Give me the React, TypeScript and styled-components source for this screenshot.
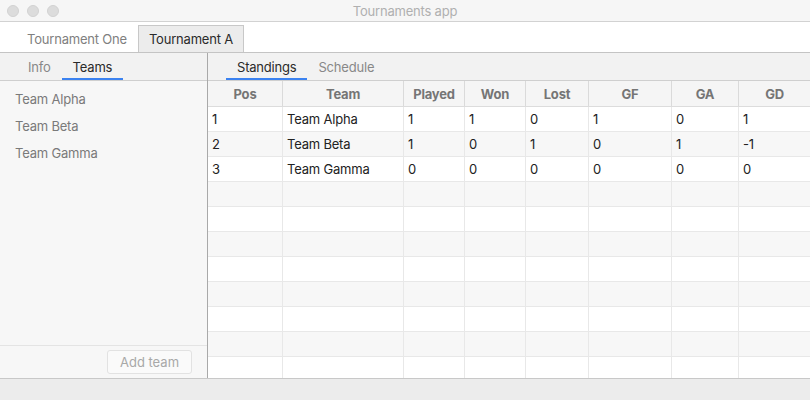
import React from "react";
import styled, { createGlobalStyle } from "styled-components";

const Global = createGlobalStyle`
  html, body { margin: 0; padding: 0; background: #ececec; }
  body { font-family: Inter, "Open Sans", "Liberation Sans", sans-serif; font-size: 13px; letter-spacing: -0.2px; }
  * { box-sizing: border-box; }
`;

const Window = styled.div`
  width: 810px;
  height: 400px;
  display: flex;
  flex-direction: column;
  overflow: hidden;
  background: #ececec;
`;

const TitleBar = styled.div`
  height: 22px;
  flex: none;
  border-bottom: 1px solid #d2d2d2;
  background: #f6f6f6;
  display: flex;
  align-items: center;
  position: relative;
  justify-content: center;
`;

const Lights = styled.div`
  position: absolute;
  left: 7px;
  top: 5px;
  display: flex;
  gap: 8px;
`;

const Light = styled.span`
  width: 12px;
  height: 12px;
  border-radius: 50%;
  background: #dcdcdc;
  border: 1px solid #d2d2d2;
`;

const Title = styled.div`
  color: #b0b0b0;
  font-size: 13px;
`;

const TopTabs = styled.div`
  height: 31px;
  flex: none;
  background: #fff;
  border-bottom: 1px solid #c4c4c4;
  display: flex;
  align-items: flex-end;
  padding-left: 16px;
`;

const TopTab = styled.div<{ $active?: boolean }>`
  height: 27px;
  padding: 0 ${(p) => (p.$active ? 10 : 11)}px;
  display: flex;
  align-items: center;
  color: ${(p) => (p.$active ? "#2a2a2a" : "#808080")};
  background: ${(p) => (p.$active ? "#ececec" : "transparent")};
  border: ${(p) => (p.$active ? "1px solid #c8c8c8" : "none")};
  border-bottom: none;
`;

const Body = styled.div`
  flex: none;
  height: 325px;
  display: flex;
`;

const LeftPane = styled.div`
  width: 208px;
  flex: none;
  border-right: 1px solid #a9a9a9;
  background: #f7f7f7;
  display: flex;
  flex-direction: column;
`;

const SubTabs = styled.div<{ $pad: number }>`
  height: 28px;
  flex: none;
  background: #f2f2f2;
  border-bottom: 1px solid #cfcfcf;
  display: flex;
  padding-left: ${(p) => p.$pad}px;
`;

const SubTab = styled.div<{ $active?: boolean }>`
  height: 27px;
  padding: 3px 11px 0;
  display: flex;
  align-items: center;
  color: ${(p) => (p.$active ? "#2a2a2a" : "#888")};
  border-bottom: 2px solid ${(p) => (p.$active ? "#3b82f0" : "transparent")};
`;

const TeamList = styled.div`
  flex: 1;
  padding-top: 4px;
`;

const TeamItem = styled.div`
  height: 27px;
  display: flex;
  align-items: center;
  padding-left: 15px;
  color: #7a7a7a;
`;

const LeftFooter = styled.div`
  height: 33px;
  flex: none;
  border-top: 1px solid #e4e4e4;
  display: flex;
  justify-content: flex-end;
  align-items: flex-start;
  padding: 4px 15px 0 0;
`;

const Button = styled.button`
  height: 24px;
  width: 85px;
  font: inherit;
  font-size: 13px;
  color: #a8a8a8;
  background: #fafafa;
  border: 1px solid #e2e2e2;
  border-radius: 3px;
  padding: 0;
`;

const RightPane = styled.div`
  flex: 1;
  display: flex;
  flex-direction: column;
  background: #fff;
  overflow: hidden;
`;

const cols = "75px 121px 61px 61px 63px 83px 67px 1fr";

const HeaderRow = styled.div`
  display: grid;
  grid-template-columns: ${cols};
  height: 26px;
  flex: none;
  background: #f5f5f5;
  border-bottom: 1px solid #dcdcdc;
`;

const HeaderCell = styled.div`
  border-right: 1px solid #dadada;
  display: flex;
  align-items: center;
  justify-content: center;
  font-weight: 700;
  color: #757575;
  &:last-child { border-right: none; }
`;

const Row = styled.div<{ $alt?: boolean }>`
  display: grid;
  grid-template-columns: ${cols};
  height: 25px;
  flex: none;
  background: ${(p) => (p.$alt ? "#f7f7f7" : "#fff")};
  border-bottom: 1px solid #e8e8e8;
`;

const Cell = styled.div`
  border-right: 1px solid #e8e8e8;
  display: flex;
  align-items: center;
  padding-left: 4px;
  color: #222;
  &:last-child { border-right: none; }
`;

const StatusBar = styled.div`
  flex: 1;
  border-top: 1px solid #c8c8c8;
  background: #ececec;
`;

const headers = ["Pos", "Team", "Played", "Won", "Lost", "GF", "GA", "GD"];
const data: string[][] = [
  ["1", "Team Alpha", "1", "1", "0", "1", "0", "1"],
  ["2", "Team Beta", "1", "0", "1", "0", "1", "-1"],
  ["3", "Team Gamma", "0", "0", "0", "0", "0", "0"],
];

export default function App() {
  const rows: string[][] = [...data];
  while (rows.length < 11) rows.push(["", "", "", "", "", "", "", ""]);
  return (
    <Window>
      <Global />
      <TitleBar>
        <Lights>
          <Light />
          <Light />
          <Light />
        </Lights>
        <Title>Tournaments app</Title>
      </TitleBar>
      <TopTabs>
        <TopTab>Tournament One</TopTab>
        <TopTab $active>Tournament A</TopTab>
      </TopTabs>
      <Body>
        <LeftPane>
          <SubTabs $pad={17}>
            <SubTab>Info</SubTab>
            <SubTab $active>Teams</SubTab>
          </SubTabs>
          <TeamList>
            <TeamItem>Team Alpha</TeamItem>
            <TeamItem>Team Beta</TeamItem>
            <TeamItem>Team Gamma</TeamItem>
          </TeamList>
          <LeftFooter>
            <Button>Add team</Button>
          </LeftFooter>
        </LeftPane>
        <RightPane>
          <SubTabs $pad={18}>
            <SubTab $active>Standings</SubTab>
            <SubTab>Schedule</SubTab>
          </SubTabs>
          <HeaderRow>
            {headers.map((h) => (
              <HeaderCell key={h}>{h}</HeaderCell>
            ))}
          </HeaderRow>
          {rows.map((r, i) => (
            <Row key={i} $alt={i % 2 === 1}>
              {r.map((c, j) => (
                <Cell key={j}>{c}</Cell>
              ))}
            </Row>
          ))}
        </RightPane>
      </Body>
      <StatusBar />
    </Window>
  );
}
